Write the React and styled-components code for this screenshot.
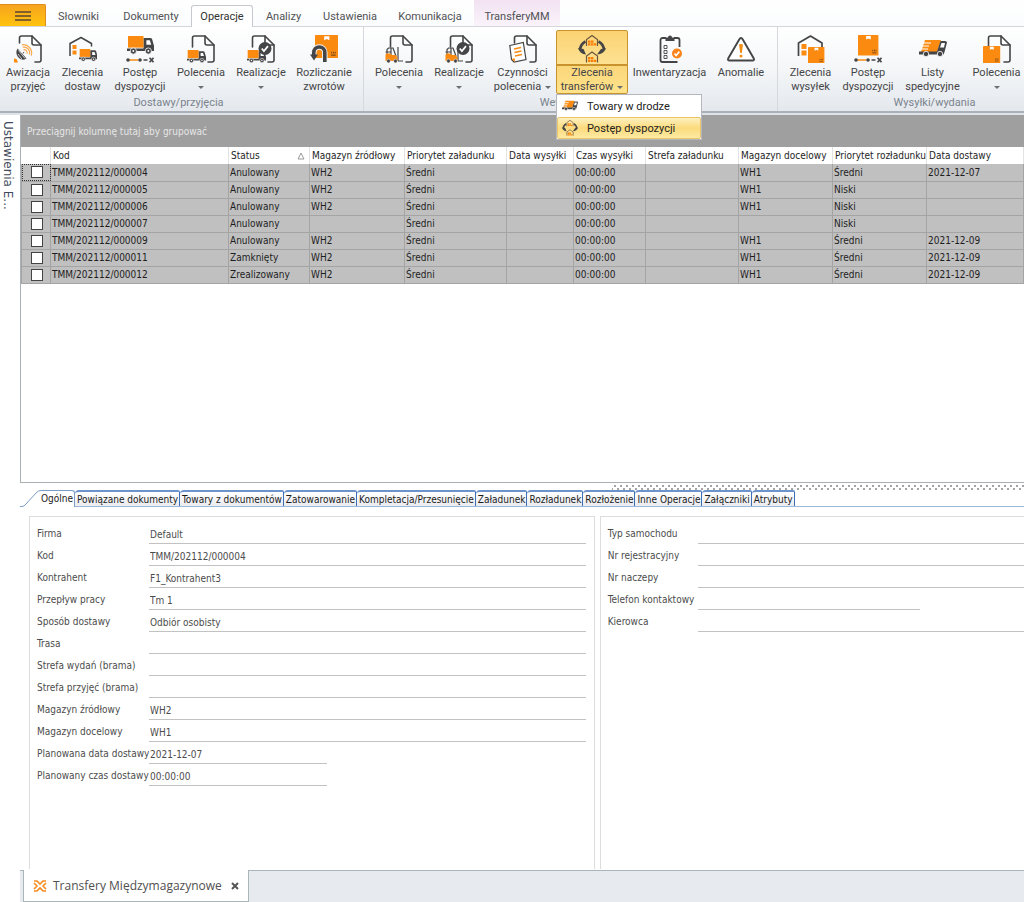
import React from "react";
import styled, { createGlobalStyle, css } from "styled-components";

const uiFont = `Roboto, "Open Sans", sans-serif`;
const gridFont = `"DejaVu Sans Condensed", "DejaVu Sans", sans-serif`;

const INK = "#454547";
const ORANGE = "#fb8b10";

const GlobalStyle = createGlobalStyle`
	* {
		box-sizing: border-box;
	}
	body {
		margin: 0;
		background: #fff;
		color: ${INK};
		font-family: ${uiFont};
		font-size: 11px;
	}
	button,
	input {
		font: inherit;
		color: inherit;
		margin: 0;
		padding: 0;
		border: 0;
		background: none;
	}
`;

/**
 * Icon parts, all drawn on a 28 x 28 board
 */
const Page = ({ short }) => (
	<g fill="none" stroke={INK} strokeWidth="1.6" strokeLinecap="round" strokeLinejoin="round">
		<path d={`M5.5 ${short ? 8 : 12}V3a2 2 0 0 1 2-2H18l9 9v15a2 2 0 0 1-2 2h-4`} />
		<path d="M18 1v7a2 2 0 0 0 2 2h7" />
	</g>
);

const Truck = ({ at = "0 0", size = 1 }) => (
	<g transform={`translate(${at}) scale(${size})`}>
		<path fill={INK} d="M0 13h17V2h7q1.500 0 2 1.500L27.500 9q.5 1 .5 2v4.500H0z" />
		<path fill={ORANGE} d="M1 0h16v12H1z" />
		<path fill="#fff" d="M20 4.500h3.500L25 9h-5z" />
		<circle cx="6.500" cy="15.500" r="3.200" fill={INK} stroke="#fff" strokeWidth=".8" />
		<circle cx="22" cy="15.500" r="3.200" fill={INK} stroke="#fff" strokeWidth=".8" />
		<circle cx="6.500" cy="15.500" r="1" fill="#fff" />
		<circle cx="22" cy="15.500" r="1" fill="#fff" />
	</g>
);

const Forklift = () => (
	<g>
		<path d="M2 20v-5.500l1.500-1.500h4.500l3 8M6 13v7M.5 17H6M13 12v14M13 26h5" fill="none" stroke={INK} strokeWidth="1.200" />
		<path fill={ORANGE} d="M.5 20q0-1.500 1.500-1.500h3l2 1.500h3.500l2 2.500V26H.5z" />
		<circle cx="3.500" cy="26" r="1.900" fill={INK} stroke="#fff" strokeWidth=".5" />
		<circle cx="10.500" cy="26" r="1.900" fill={INK} stroke="#fff" strokeWidth=".5" />
	</g>
);

const Parcel = ({ at, size = 1 }) => (
	<g transform={`translate(${at}) scale(${size})`}>
		<rect width="20" height="20" rx=".5" fill={ORANGE} />
		<path fill="#fff" d="M8 1h4.500v3.500l-2.200-1L8 4.500z" />
		<path d="M14 17.500h4M14.500 16v-1.500M16.200 16v-1.500M17.600 16v-1.500" stroke="#7a4a1c" strokeWidth=".9" />
	</g>
);

const Tick = ({ x, y, r, fill = INK }) => (
	<g>
		<circle cx={x} cy={y} r={r} fill={fill} />
		<path
			d={`M${x - r / 2} ${y}l${r / 3} ${r / 2.5} ${r / 1.6}-${r / 1.3}`}
			fill="none"
			stroke="#fff"
			strokeWidth="1.700"
		/>
	</g>
);

const Route = () => (
	<g>
		<path d="M3 25h9" stroke={ORANGE} strokeWidth="1.500" />
		<circle cx="2" cy="25" r="1.800" fill={INK} />
		<circle cx="14" cy="25" r="1.800" fill={INK} />
		<path d="M17.500 25h4M23.500 22.800l4 4.400M27.500 22.800l-4 4.400" stroke={INK} strokeWidth="1.600" />
	</g>
);

const SmallHouse = ({ y }) => (
	<g>
		<path d={`M8.500 ${y + 11}v-6.500L14 ${y + 0.5}l5.500 4v6.500`} fill="none" stroke="#6b553c" strokeWidth="1.200" />
		<path
			d={`M10 ${y + 5.5}h2.500v2.300H10zM13 ${y + 5.5}h2.500v2.300H13zM10 ${y + 8.3}h2.500v2.300H10zM13 ${y + 8.3}h2.500v2.300H13zM16 ${y + 8.3}h2.300v2.300H16z`}
			fill="#f77f0a"
		/>
	</g>
);

const ICONS = {
	notice: (
		<>
			<Page short />
			<path fill={INK} d="M3.500 13.500l9 10q-5 3-8.500-1.500-3-4-.5-8.500z" />
			<path fill="none" stroke="#fff" strokeWidth=".7" d="M4.500 15.500l6.500 8M4 19l4 5.200" />
			<path fill={ORANGE} d="M0 23.500l2.500.5 1.500 3.500H0z" />
			<path d="M9 18.500l1-1.500" stroke={INK} />
			<path
				d="M9.500 14.800a3 3 0 0 1 3.500 3.800M8.800 12.200a5.600 5.600 0 0 1 6.500 7.200M8 9.800a8.400 8.400 0 0 1 9.300 10.800"
				fill="none"
				stroke="#f9a94a"
				strokeWidth="1.200"
			/>
		</>
	),
	houseTruck: (
		<>
			<path d="M1 21V8.500L12 2.500l10.500 6v3" fill="none" stroke={INK} strokeWidth="1.500" strokeLinejoin="round" />
			<path d="M3.500 10h4v4h-4zM3.500 15.500h4v4h-4z" fill={ORANGE} />
			<Truck at="10 14" size={0.66} />
		</>
	),
	truckRoute: (
		<>
			<Truck at="1 1" size={0.97} />
			<Route />
		</>
	),
	pageTruck: (
		<>
			<Page />
			<Truck at="0 15" size={0.68} />
		</>
	),
	pageTruckTick: (
		<>
			<Page />
			<Truck at="0 15" size={0.68} />
			<Tick x={18} y={13.5} r={6.5} />
		</>
	),
	returns: (
		<>
			<Parcel at="5 0" size={1.15} />
			<path d="M3.800 20v-2.500a5.500 5.500 0 0 1 11 0V27" fill="none" stroke="#f1f3f5" strokeWidth="5.500" />
			<circle cx="9.500" cy="18" r="2" fill={ORANGE} />
			<path d="M3.800 20v-2.500a5.500 5.500 0 0 1 11 0V27" fill="none" stroke={INK} strokeWidth="3.600" />
			<path d="M0 19.500h8l-4 6z" fill={INK} />
		</>
	),
	pageLift: (
		<>
			<Page />
			<Forklift />
		</>
	),
	pageLiftTick: (
		<>
			<Page />
			<Forklift />
			<Tick x={18} y={13.5} r={6.5} />
		</>
	),
	pages: (
		<>
			<Page short />
			<path d="M.8 10.500l13.500-3 2.700 17-12 2.500-2.500-2.500z" fill="#fff" stroke={INK} strokeWidth="1.200" />
			<path d="M5 14l7-1.500M5.500 17.500l7-1.500M6 21l7-1.500" stroke={ORANGE} strokeWidth="1.300" />
			<path d="M2.500 24l3-.7.8 3.700z" fill={ORANGE} />
		</>
	),
	transfer: (
		<>
			<path
				d="M7.500 6.500Q2.500 9 2 15M20.500 6.500Q25.500 9 26 15"
				fill="none"
				stroke={INK}
				strokeWidth="2.600"
			/>
			<path d="M0 13l5.500 1L8 19.500Q2 19 0 13zM28 13l-5 1-4 5.500q7-.5 9-6.500z" fill={INK} />
			<SmallHouse y={0} />
			<SmallHouse y={16.5} />
		</>
	),
	clipboard: (
		<>
			<path
				d="M10 3H6.500a2 2 0 0 0-2 2v20a2 2 0 0 0 2 2h15M18 3h3.500a2 2 0 0 1 2 2v7"
				fill="none"
				stroke={INK}
				strokeWidth="1.800"
			/>
			<path d="M9.500 6V2.500h2.500a2 2 0 0 1 4 0h2.500V6z" fill={INK} />
			<path d="M8 10.500h3v3H8zM8 15.500h3v3H8zM8 20.500h3v3H8z" fill="none" stroke={INK} strokeWidth=".9" />
			<Tick x={21} y={18.5} r={5} fill="#fa8419" />
		</>
	),
	warning: (
		<>
			<path
				d="M14 3q1 0 1.500 1l11.300 19.500q.8 2-1.300 2h-23q-2.100 0-1.300-2L12.500 4q.5-1 1.500-1z"
				fill="#fff"
				stroke={INK}
				strokeWidth="1.900"
			/>
			<path d="M12 9.500q2-1 4 0L14.800 18h-1.600z" fill="#ef8d18" />
			<circle cx="14" cy="21" r="1.500" fill="#ef8d18" />
		</>
	),
	houseParcel: (
		<>
			<path d="M1.500 21V8L13.500 1 25 8v4" fill="none" stroke={INK} strokeWidth="1.700" strokeLinejoin="round" />
			<path d="M4.500 9h5v5h-5zM4.500 15.500h5v5h-5z" fill={ORANGE} />
			<Parcel at="11 12" size={0.82} />
		</>
	),
	parcelRoute: (
		<>
			<Parcel at="4 0" size={1.02} />
			<Route />
		</>
	),
	fastTruck: (
		<>
			<path d="M6 5h16l-4 12H2z" fill={ORANGE} />
			<path d="M4 8h8M2 11h8M3 14h6" stroke="#fff" strokeWidth="1.200" />
			<path d="M0 16.500h18L21.500 6H26q2 0 2 1.500L25.500 17l-1 2.500H0z" fill={INK} />
			<path d="M22.500 8h3.500l-1 4.500h-4z" fill="#fff" />
			<circle cx="7" cy="19" r="2.700" fill={INK} stroke="#fff" strokeWidth=".8" />
			<circle cx="21" cy="19" r="2.700" fill={INK} stroke="#fff" strokeWidth=".8" />
		</>
	),
	pageParcel: (
		<>
			<Page />
			<Parcel at="0 11" size={0.86} />
		</>
	),
};

const Icon = ({ name, size = 28 }) => (
	<svg width={size} height={size} viewBox="0 0 28 28" aria-hidden="true">
		{ICONS[name]}
	</svg>
);

/**
 * Ribbon
 */
const Shell = styled.div`
	display: flex;
	flex-direction: column;
	min-height: 100vh;
	overflow: hidden;
`;

const TabStrip = styled.nav`
	display: flex;
	align-items: flex-end;
	height: 27px;
	background: linear-gradient(#fff, #fbfcfd);
	border-bottom: 1px solid #d3d6da;
`;

const MenuButton = styled.button`
	width: 46px;
	height: 22px;
	background: linear-gradient(#f7a521, #fbb416 50%, #ffc20e);
	border: 1px solid #e08c1c;
	border-left: 0;
	border-bottom: 0;
	border-radius: 0 2px 0 0;
	display: flex;
	align-items: center;
	justify-content: center;
`;

const RibbonTab = styled.button`
	width: ${({ $w }) => $w}px;
	height: 21px;
	padding-top: 2px;
	color: #505255;
	${({ $accent }) =>
		$accent &&
		css`
			height: 26px;
			padding-top: 7px;
			background: linear-gradient(#f2e2f2, #faf3fa);
		`}
	${({ $active }) =>
		$active &&
		css`
			height: 22px;
			margin-bottom: -1px;
			padding-top: 0;
			color: #333;
			background: #fff;
			border: 1px solid #c6cad0;
			border-bottom: 0;
			border-radius: 3px 3px 0 0;
		`}
`;

const Ribbon = styled.div`
	display: flex;
	height: 86px;
	background: linear-gradient(#fff, #f4f6f8 50%, #e4e8ed);
	border-bottom: 2px solid #a9b0b7;
`;

const RibbonGroup = styled.section`
	flex: none;
	display: flex;
	flex-direction: column;
	padding: 3px 6px 0 ${({ $first }) => ($first ? 0 : 5)}px;
	border-right: 1px solid #d5d9de;
`;

const RibbonItems = styled.div`
	display: flex;
	min-width: ${({ $min }) => $min || 0}px;
`;

const GroupTitle = styled.div`
	text-align: center;
	line-height: 18px;
	color: #7b838d;
`;

const RibbonButton = styled.button`
	width: ${({ $w }) => $w}px;
	height: 64px;
	padding-top: 4px;
	display: flex;
	flex-direction: column;
	align-items: center;
	line-height: 14px;
	white-space: nowrap;
	border: 1px solid transparent;

	svg {
		flex: none;
	}
	${({ $active }) =>
		$active &&
		css`
			background: linear-gradient(#fbd273, #fde293 54%, #c8922e 54%, #c8922e 56%, #fbd67b 56%, #ffe38a);
			border-color: #c8922e;
			border-radius: 2px;
		`}
`;

const Caption = styled.span`
	margin-top: 3px;
`;

const Arrow = styled.i`
	display: inline-block;
	vertical-align: middle;
	margin-left: ${({ $inline }) => ($inline ? 4 : 0)}px;
	border: solid transparent;
	border-width: 3px 3px 0;
	border-top-color: #6b6e72;
`;

const MenuAnchor = styled.div`
	position: relative;
`;

const Menu = styled.div`
	position: absolute;
	z-index: 5;
	top: 64px;
	left: 0;
	width: 146px;
	background: #fff;
	border: 1px solid #b4b8bd;
`;

const MenuItem = styled.button`
	display: flex;
	align-items: center;
	width: 100%;
	height: 22px;
	padding-left: 4px;
	gap: 9px;
	color: #222;
	border: 1px solid transparent;
	${({ $active }) =>
		$active &&
		css`
			background: linear-gradient(#fdf0c0, #fbdb7c 50%, #fdeaa2);
			border-color: #eac46a;
			border-radius: 2px;
		`}
`;

const TABS = [
	{ name: "Słowniki", w: 65 },
	{ name: "Dokumenty", w: 80 },
	{ name: "Operacje", w: 62, active: true },
	{ name: "Analizy", w: 61 },
	{ name: "Ustawienia", w: 72 },
	{ name: "Komunikacja", w: 88 },
	{ name: "TransferyMM", w: 86, accent: true },
];

const GROUPS = [
	{
		title: "Dostawy/przyjęcia",
		items: [
			{ icon: "notice", lines: ["Awizacja", "przyjęć"], w: 56 },
			{ icon: "houseTruck", lines: ["Zlecenia", "dostaw"], w: 53 },
			{ icon: "truckRoute", lines: ["Postęp", "dyspozycji"], w: 62 },
			{ icon: "pageTruck", lines: ["Polecenia"], arrow: true, w: 60 },
			{ icon: "pageTruckTick", lines: ["Realizacje"], arrow: true, w: 60 },
			{ icon: "returns", lines: ["Rozliczanie", "zwrotów"], w: 66 },
		],
	},
	{
		title: "Wewnętrzne",
		items: [
			{ icon: "pageLift", lines: ["Polecenia"], arrow: true, w: 60 },
			{ icon: "pageLiftTick", lines: ["Realizacje"], arrow: true, w: 60 },
			{ icon: "pages", lines: ["Czynności", "polecenia"], arrow: true, w: 67 },
			{ icon: "transfer", lines: ["Zlecenia", "transferów"], arrow: true, w: 72, active: true },
			{ icon: "clipboard", lines: ["Inwentaryzacja"], w: 83 },
			{ icon: "warning", lines: ["Anomalie"], w: 60 },
		],
	},
	{
		title: "Wysyłki/wydania",
		min: 303,
		items: [
			{ icon: "houseParcel", lines: ["Zlecenia", "wysyłek"], w: 55 },
			{ icon: "parcelRoute", lines: ["Postęp", "dyspozycji"], w: 60 },
			{ icon: "fastTruck", lines: ["Listy", "spedycyjne"], w: 69 },
			{ icon: "pageParcel", lines: ["Polecenia"], arrow: true, w: 59 },
		],
	},
];

function RibbonItem({ icon, lines, arrow, w, active }) {
	const [first, second] = lines;
	const button = (
		<RibbonButton $w={w} $active={active}>
			<Icon name={icon} />
			<Caption>{first}</Caption>
			<span>
				{second}
				{arrow && <Arrow $inline={!!second} />}
			</span>
		</RibbonButton>
	);
	if (!active) return button;
	return (
		<MenuAnchor>
			{button}
			<Menu>
				<MenuItem>
					<Icon name="fastTruck" size={16} />
					Towary w drodze
				</MenuItem>
				<MenuItem $active>
					<Icon name="transfer" size={16} />
					Postęp dyspozycji
				</MenuItem>
			</Menu>
		</MenuAnchor>
	);
}

/**
 * Orders grid
 */
const Body = styled.div`
	display: flex;
	flex: 1;
	border-top: 2px solid #dfe3e8;
`;

const SidePanel = styled.aside`
	flex: none;
	width: 20px;
	padding: 6px 5px 0 1px;
	writing-mode: vertical-rl;
	font: 12px/14px "DejaVu Sans", sans-serif;
	color: #3f4a5c;
`;

const Main = styled.main`
	flex: 1;
	min-width: 0;
	display: flex;
	flex-direction: column;
	font-family: ${gridFont};
	font-size: 10px;
`;

const GridPane = styled.section`
	height: 368px;
	overflow: hidden;
	border: solid #a9b1b5;
	border-width: 0 0 1px 1px;
`;

const GroupBar = styled.div`
	height: 32px;
	padding-left: 6px;
	line-height: 34px;
	background: #9f9f9f;
	color: #e6e6e6;
`;

const Grid = styled.table`
	width: 100%;
	table-layout: fixed;
	border-collapse: collapse;
	color: #1e1e1e;
	white-space: nowrap;

	th {
		height: 17px;
		padding: 0 0 0 2px;
		text-align: left;
		font-weight: normal;
		border-right: 1px solid #e3e3e3;
	}
	td {
		height: 17px;
		padding: 0 0 0 1px;
		background: #c0c0c0;
		border: 1px solid #a4a4a4;
		border-top: 0;
	}
`;

const HeadCell = styled.div`
	display: flex;
	justify-content: space-between;
	align-items: center;
	padding-right: 4px;
`;

const TickCell = styled.td`
	text-align: center;
	${({ $focus }) =>
		$focus &&
		css`
			outline: 1px dotted #333;
			outline-offset: -1px;
		`}
`;

const Check = styled.input`
	appearance: none;
	display: block;
	width: 12px;
	height: 12px;
	margin: 0 auto;
	background: #fff;
	border: 1px solid #444;
`;

const COLUMNS = [
	["Kod", 178],
	["Status", 81],
	["Magazyn źródłowy", 95],
	["Priorytet załadunku", 102],
	["Data wysyłki", 67],
	["Czas wysyłki", 72],
	["Strefa załadunku", 93],
	["Magazyn docelowy", 94],
	["Priorytet rozładunku", 94],
	["Data dostawy", null],
];

const ROWS = [
	["TMM/202112/000004", "Anulowany", "WH2", "Średni", "", "00:00:00", "", "WH1", "Średni", "2021-12-07"],
	["TMM/202112/000005", "Anulowany", "WH2", "Średni", "", "00:00:00", "", "WH1", "Niski", ""],
	["TMM/202112/000006", "Anulowany", "WH2", "Średni", "", "00:00:00", "", "WH1", "Niski", ""],
	["TMM/202112/000007", "Anulowany", "", "Średni", "", "00:00:00", "", "", "Niski", ""],
	["TMM/202112/000009", "Anulowany", "WH2", "Średni", "", "00:00:00", "", "WH1", "Średni", "2021-12-09"],
	["TMM/202112/000011", "Zamknięty", "WH2", "Średni", "", "00:00:00", "", "WH1", "Średni", "2021-12-09"],
	["TMM/202112/000012", "Zrealizowany", "WH2", "Średni", "", "00:00:00", "", "WH1", "Średni", "2021-12-09"],
];

function OrdersGrid() {
	return (
		<GridPane>
			<GroupBar>Przeciągnij kolumnę tutaj aby grupować</GroupBar>
			<Grid>
				<colgroup>
					<col width="29" />
					{COLUMNS.map(([name, w]) => (
						<col key={name} width={w || undefined} />
					))}
				</colgroup>
				<thead>
					<tr>
						<th />
						{COLUMNS.map(([name]) => (
							<th key={name}>
								<HeadCell>
									{name}
									{name === "Status" && (
										<svg width="8" height="8" viewBox="0 0 8 8" aria-hidden="true">
											<path d="M4 1l3 6H1z" fill="none" stroke="#999" />
										</svg>
									)}
								</HeadCell>
							</th>
						))}
					</tr>
				</thead>
				<tbody>
					{ROWS.map((row, i) => (
						<tr key={row[0]}>
							<TickCell $focus={i === 0}>
								<Check type="checkbox" aria-label={row[0]} />
							</TickCell>
							{row.map((value, c) => (
								<td key={c}>{value}</td>
							))}
						</tr>
					))}
				</tbody>
			</Grid>
		</GridPane>
	);
}

/**
 * Details
 */
const Splitter = styled.div`
	height: 6px;
	margin: 1px 0 0 592px;
	background-image: radial-gradient(circle, #a5a5a5 1px, transparent 1px), radial-gradient(circle, #a5a5a5 1px, transparent 1px);
	background-size: 6px 6px;
	background-position: 0 -1px, 3px 2px;
`;

const DetailTabs = styled.div`
	display: flex;
	height: 17px;
	color: #1b1b1b;
	border-bottom: 1px solid #9db8d9;
`;

const DetailTab = styled.button`
	padding: 0 1px 0 2px;
	white-space: nowrap;
	line-height: 16px;
	border: 1px solid #3d6db5;
	border-top-width: 2px;
	border-top-color: #6d93cc;
	border-left: 0;
	border-bottom: 0;
	border-radius: 4px 2px 0 0;
	background: linear-gradient(#fff, #e9ebf0);
	${({ $active }) =>
		$active &&
		css`
			margin-bottom: -1px;
			padding-left: 0;
			background: #fff;
			border-top-width: 1px;
			border-radius: 0 3px 0 0;
			border-color: #7d9cc9;
		`}
`;

const Slant = styled.svg`
	flex: none;
	margin-bottom: -1px;
	background: #fff;
`;

const Panels = styled.div`
	flex: 1;
	display: grid;
	grid-template-columns: 4fr 3fr;
	gap: 5px;
	margin: 9px 0 1px 9px;
`;

const Panel = styled.form`
	padding: 7px 8px 0 7px;
	border: solid #dcdcdc;
	border-width: 1px 1px 0;
	${({ $open }) =>
		$open &&
		css`
			padding-right: 0;
			border-right: 0;
		`}
`;

const Field = styled.label`
	display: flex;
	height: 22px;
	line-height: 20px;
	color: #4c4c4c;
	white-space: nowrap;

	span {
		flex: none;
		width: ${({ $label }) => $label}px;
	}
	input {
		flex: 1;
		min-width: 0;
		max-width: ${({ $max }) => ($max ? `${$max}px` : "none")};
		height: 20px;
		padding: 2px 0 0 1px;
		border-bottom: 1px solid #c2c2c2;
	}
`;

const LEFT = [
	["Firma", "Default"],
	["Kod", "TMM/202112/000004"],
	["Kontrahent", "F1_Kontrahent3"],
	["Przepływ pracy", "Tm 1"],
	["Sposób dostawy", "Odbiór osobisty"],
	["Trasa", ""],
	["Strefa wydań (brama)", ""],
	["Strefa przyjęć (brama)", ""],
	["Magazyn źródłowy", "WH2"],
	["Magazyn docelowy", "WH1"],
	["Planowana data dostawy", "2021-12-07", 178],
	["Planowany czas dostawy", "00:00:00", 178],
];

const RIGHT = [
	["Typ samochodu", ""],
	["Nr rejestracyjny", ""],
	["Nr naczepy", ""],
	["Telefon kontaktowy", "", 222],
	["Kierowca", ""],
];

const DETAIL_TABS = [
	"Powiązane dokumenty",
	"Towary z dokumentów",
	"Zatowarowanie",
	"Kompletacja/Przesunięcie",
	"Załadunek",
	"Rozładunek",
	"Rozłożenie",
	"Inne Operacje",
	"Załączniki",
	"Atrybuty",
];

const Fields = ({ list, label }) =>
	list.map(([name, value, max]) => (
		<Field key={name} $label={label} $max={max}>
			<span>{name}</span>
			<input type="text" defaultValue={value} />
		</Field>
	));

/**
 * Open documents
 */
const DocBar = styled.footer`
	display: flex;
	height: 32px;
	padding-left: 3px;
	background: #e7eaef;
	border-top: 1px solid #a9b5b8;
	font-family: "Open Sans", sans-serif;
`;

const DocTab = styled.div`
	display: flex;
	align-items: center;
	gap: 6px;
	margin-top: -1px;
	padding: 0 9px;
	font-size: 12px;
	color: #505050;
	background: #fff;
	border: 1px solid #a9b5b8;
	border-top: 0;
`;

const CloseButton = styled.button`
	display: flex;
	margin-left: 3px;
`;

export default function App() {
	return (
		<Shell>
			<GlobalStyle />
			<TabStrip>
				<MenuButton aria-label="Menu">
					<svg width="16" height="10" viewBox="0 0 16 10" aria-hidden="true">
						<path d="M0 1h16M0 5h16M0 9h16" stroke="#5a4632" strokeWidth="1.500" />
					</svg>
				</MenuButton>
				{TABS.map(({ name, w, active, accent }) => (
					<RibbonTab key={name} $w={w} $active={active} $accent={accent}>
						{name}
					</RibbonTab>
				))}
			</TabStrip>
			<Ribbon>
				{GROUPS.map(({ title, items, min }, i) => (
					<RibbonGroup key={title} $first={i === 0}>
						<RibbonItems $min={min}>
							{items.map((item) => (
								<RibbonItem key={item.icon} {...item} />
							))}
						</RibbonItems>
						<GroupTitle>{title}</GroupTitle>
					</RibbonGroup>
				))}
			</Ribbon>
			<Body>
				<SidePanel>Ustawienia E...</SidePanel>
				<Main>
					<OrdersGrid />
					<Splitter />
					<DetailTabs>
						<Slant width="21" height="17" viewBox="0 0 21 17" aria-hidden="true">
							<path d="M0 16.500h2q2 0 4-2.500L16 3q2-2.500 5-2.500" fill="none" stroke="#7d9cc9" />
						</Slant>
						<DetailTab $active>Ogólne</DetailTab>
						{DETAIL_TABS.map((name) => (
							<DetailTab key={name}>{name}</DetailTab>
						))}
					</DetailTabs>
					<Panels>
						<Panel>
							<Fields list={LEFT} label={112} />
						</Panel>
						<Panel $open>
							<Fields list={RIGHT} label={90} />
						</Panel>
					</Panels>
					<DocBar>
						<DocTab>
							<svg width="14" height="12" viewBox="0 0 14 12" aria-hidden="true">
								<path
									d="M1 1h3l3 3 3-3h3M1 11h3l3-3 3 3h3M1 3l3 3-3 3M13 3l-3 3 3 3"
									fill="none"
									stroke="#f58a1f"
									strokeWidth="1.600"
								/>
							</svg>
							Transfery Międzymagazynowe
							<CloseButton aria-label="Zamknij">
								<svg width="8" height="8" viewBox="0 0 8 8" aria-hidden="true">
									<path d="M1 1l6 6M7 1L1 7" stroke="#555" strokeWidth="2" />
								</svg>
							</CloseButton>
						</DocTab>
					</DocBar>
				</Main>
			</Body>
		</Shell>
	);
}
